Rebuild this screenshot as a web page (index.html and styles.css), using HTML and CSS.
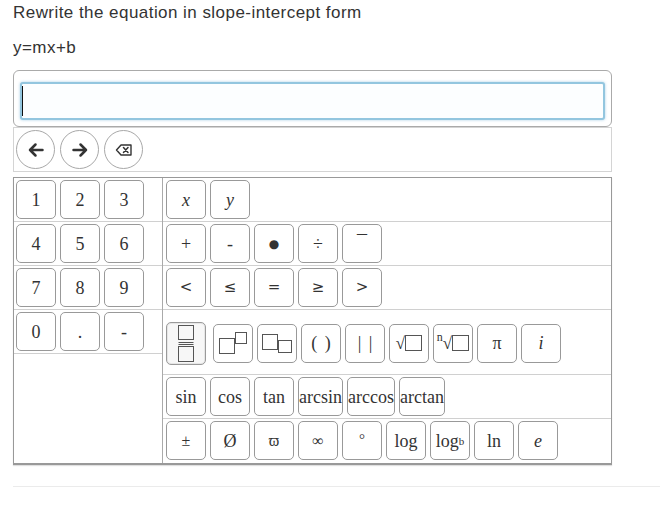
FILE: index.html
```html
<!DOCTYPE html>
<html>
<head>
<meta charset="utf-8">
<link rel="stylesheet" href="styles.css">
</head>
<body>
<div class="page">
  <p class="title">Rewrite the equation in slope-intercept form</p>
  <p class="eq">y=mx+b</p>
  <div class="answer">
    <div class="field"><span class="caret"></span></div>
  </div>
  <div class="toolbar">
    <button class="circle" type="button">
      <svg width="18" height="16" viewBox="0 0 18 16"><path d="M15.5 8H3 M8.5 2.5 L3 8 L8.5 13.5" fill="none" stroke="#333" stroke-width="2.5" stroke-linecap="round" stroke-linejoin="round"/></svg>
    </button>
    <button class="circle" type="button">
      <svg width="18" height="16" viewBox="0 0 18 16"><path d="M2.5 8H15 M9.5 2.5 L15 8 L9.5 13.5" fill="none" stroke="#333" stroke-width="2.5" stroke-linecap="round" stroke-linejoin="round"/></svg>
    </button>
    <button class="circle" type="button">
      <svg width="18" height="14" viewBox="0 0 18 14"><path d="M6 2 H16 V12 H6 L1.5 7 Z" fill="none" stroke="#333" stroke-width="1.4" stroke-linejoin="round"/><path d="M8.5 4.5 L13 9.5 M13 4.5 L8.5 9.5" fill="none" stroke="#333" stroke-width="1.5" stroke-linecap="round"/></svg>
    </button>
  </div>
  <div class="keypad">
    <div class="numpad">
      <div class="row"><span class="key">1</span><span class="key">2</span><span class="key">3</span></div>
      <div class="row"><span class="key">4</span><span class="key">5</span><span class="key">6</span></div>
      <div class="row"><span class="key">7</span><span class="key">8</span><span class="key">9</span></div>
      <div class="row"><span class="key">0</span><span class="key">.</span><span class="key">-</span></div>
    </div>
    <div class="funcs">
      <div class="row"><span class="key it">x</span><span class="key it">y</span></div>
      <div class="row">
        <span class="key">+</span><span class="key">-</span><span class="key dot">●</span><span class="key">÷</span><span class="key top">¯</span>
      </div>
      <div class="row">
        <span class="key sym">&lt;</span><span class="key sym">≤</span><span class="key sym">=</span><span class="key sym">≥</span><span class="key sym">&gt;</span>
      </div>
      <div class="row tall">
        <span class="key frac">
          <svg width="18" height="40" viewBox="0 0 18 40"><rect x="1.5" y="2.5" width="15" height="14" fill="none" stroke="#555"/><path d="M1.5 19.5H16.5 M1.5 21.5H16.5" stroke="#555"/><rect x="1.5" y="23.5" width="15" height="15" fill="none" stroke="#555"/></svg>
        </span>
        <span class="key">
          <svg width="30" height="24" viewBox="0 0 30 24"><rect x="1.5" y="7.5" width="15" height="15" fill="none" stroke="#555"/><rect x="17.5" y="1.5" width="11" height="11" fill="none" stroke="#555"/></svg>
        </span>
        <span class="key">
          <svg width="32" height="24" viewBox="0 0 32 24"><rect x="1.5" y="3.5" width="15" height="15" fill="none" stroke="#555"/><rect x="17.5" y="9.5" width="13" height="12" fill="none" stroke="#555"/></svg>
        </span>
        <span class="key spaced">( )</span>
        <span class="key spaced">| |</span>
        <span class="key"><span class="rad">√</span><span class="box"></span></span>
        <span class="key"><span class="idx">n</span><span class="rad">√</span><span class="box"></span></span>
        <span class="key">π</span>
        <span class="key it">i</span>
      </div>
      <div class="row">
        <span class="key">sin</span><span class="key">cos</span><span class="key">tan</span><span class="key">arcsin</span><span class="key">arccos</span><span class="key">arctan</span>
      </div>
      <div class="row last">
        <span class="key small">±</span><span class="key">Ø</span><span class="key small">ϖ</span><span class="key small">∞</span><span class="key deg">°</span><span class="key">log</span><span class="key">log<sub>b</sub></span><span class="key">ln</span><span class="key it">e</span>
      </div>
    </div>
  </div>
</div>
<div class="rule"></div>
</body>
</html>
```

FILE: styles.css
```css
html, body {
  margin: 0;
  padding: 0;
  background: #fff;
}

body {
  font-family: "Liberation Sans", Arial, sans-serif;
  color: #333;
}

.page {
  width: 599px;
  margin-left: 13px;
}

.title {
  margin: 3px 0 0;
  font-size: 17px;
  letter-spacing: 0.45px;
  line-height: 20px;
  color: #333;
}

.eq {
  margin: 15px 0 0;
  font-size: 17px;
  letter-spacing: 0.45px;
  line-height: 20px;
  color: #333;
}

.answer {
  margin-top: 12px;
  box-sizing: border-box;
  height: 57px;
  border: 1px solid #aaa;
  border-radius: 6px;
  padding: 11px 6px 6px;
  background: #fff;
}

.field {
  box-sizing: border-box;
  height: 38px;
  border: 2px solid #93c6df;
  border-radius: 3px;
  box-shadow: 0 0 3px rgba(110, 175, 215, 0.6);
  background: #fcfeff;
  padding: 2px 0 0 0;
}

.caret {
  display: block;
  width: 0;
  height: 30px;
  border-left: 1.5px solid #111;
}

.toolbar {
  box-sizing: border-box;
  height: 45px;
  border: 1px solid #d4d4d4;
  padding: 2px 2px;
  display: flex;
  gap: 5px;
}

.circle {
  box-sizing: border-box;
  width: 39px;
  height: 39px;
  border: 1px solid #a8a8a8;
  border-radius: 50%;
  background: #fff;
  padding: 0;
  display: flex;
  align-items: center;
  justify-content: center;
}

.keypad {
  margin-top: 5px;
  display: flex;
  border: 1px solid #999;
  border-bottom: 2px solid #999;
  box-shadow: 0 1px 1px rgba(0, 0, 0, 0.12);
}

.numpad {
  width: 148px;
  border-right: 1px solid #aaa;
}

.funcs {
  flex: 1;
}

.row {
  display: flex;
  gap: 4px;
  padding: 2px 3px;
  border-bottom: 1px solid #d0d0d0;
}

.numpad .row {
  padding-left: 2px;
}

.row.tall {
  height: 65px;
  box-sizing: border-box;
  align-items: center;
  padding-top: 2px;
  padding-bottom: 0;
}

.row.last {
  border-bottom: none;
  padding-bottom: 3px;
}

.key {
  box-sizing: border-box;
  min-width: 40px;
  height: 39px;
  border: 1px solid #999;
  border-radius: 5px;
  background: #fff;
  display: flex;
  align-items: center;
  justify-content: center;
  font-family: "Liberation Serif", "DejaVu Serif", serif;
  font-size: 18px;
  color: #333;
  line-height: 1;
  white-space: pre;
}

.key.spaced {
  word-spacing: 3px;
}

.key.it {
  font-style: italic;
}

.key.sym {
  font-family: "DejaVu Sans", sans-serif;
  font-size: 15px;
}

.key.dot {
  font-family: "DejaVu Sans", sans-serif;
  font-size: 12px;
}

.key.top {
  align-items: flex-start;
  padding-top: 8px;
  font-size: 20px;
}

.key.small {
  font-size: 16px;
}

.key.deg {
  align-items: flex-start;
  padding-top: 10px;
  font-size: 15px;
}

.key.frac {
  height: 43px;
  margin-right: 3px;
  background: #f7f7f7;
  border-color: #9a9a9a;
  box-shadow: inset 0 0 0 1px #e6e6e6;
}

.key sub {
  font-size: 11px;
  vertical-align: -4px;
  line-height: 0;
}

.rad {
  font-size: 17px;
}

.box {
  display: inline-block;
  box-sizing: border-box;
  width: 17px;
  height: 16px;
  border: 1px solid #555;
}

.idx {
  font-size: 12px;
  align-self: flex-start;
  margin-top: 6px;
}

.rule {
  margin: 21px 0 0 13px;
  border-top: 1px solid #ebebeb;
}
```
